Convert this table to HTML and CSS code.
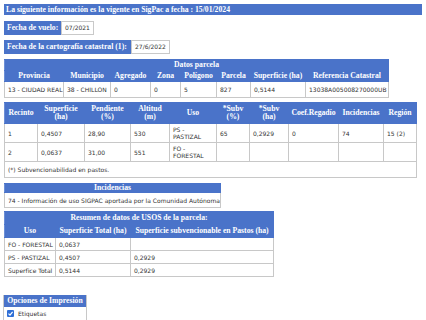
FILE: index.html
```html
<!DOCTYPE html>
<html lang="es">
<head>
<meta charset="utf-8">
<link rel="stylesheet" href="styles.css">
</head>
<body>
<div class="page">
  <div class="titlebar">La siguiente información es la vigente en SigPac a fecha : 15/01/2024</div>

  <div class="fecha fecha-vuelo"><span class="flabel">Fecha de vuelo:</span><span class="fvalue">07/2021</span></div>
  <div class="fecha fecha-cart"><span class="flabel">Fecha de la cartografía catastral (1):</span><span class="fvalue">27/6/2022</span></div>

  <table class="grid datos">
    <colgroup><col style="width:59px"><col style="width:47px"><col style="width:40px"><col style="width:30px"><col style="width:36px"><col style="width:34px"><col style="width:55px"><col style="width:83px"></colgroup>
    <tr><th class="cap" colspan="8">Datos parcela</th></tr>
    <tr><th>Provincia</th><th>Municipio</th><th>Agregado</th><th>Zona</th><th>Polígono</th><th>Parcela</th><th>Superficie (ha)</th><th>Referencia Catastral</th></tr>
    <tr><td>13 - CIUDAD REAL</td><td>38 - CHILLON</td><td>0</td><td>0</td><td>5</td><td>827</td><td>0,5144</td><td>13038A005008270000UB</td></tr>
  </table>

  <table class="grid recinto">
    <colgroup><col style="width:33px"><col style="width:47px"><col style="width:46px"><col style="width:39px"><col style="width:47px"><col style="width:33px"><col style="width:39px"><col style="width:50px"><col style="width:45px"><col style="width:33px"></colgroup>
    <tr class="head2"><th>Recinto</th><th>Superficie<br>(ha)</th><th>Pendiente<br>(%)</th><th>Altitud<br>(m)</th><th>Uso</th><th>*Subv<br>(%)</th><th>*Subv<br>(ha)</th><th>Coef.Regadío</th><th>Incidencias</th><th>Región</th></tr>
    <tr class="drow"><td>1</td><td>0,4507</td><td>28,90</td><td>530</td><td>PS -<br>PASTIZAL</td><td>65</td><td>0,2929</td><td>0</td><td>74</td><td>15 (2)</td></tr>
    <tr class="drow"><td>2</td><td>0,0637</td><td>31,00</td><td>551</td><td>FO -<br>FORESTAL</td><td></td><td></td><td></td><td></td><td></td></tr>
    <tr class="foot"><td colspan="10">(*) Subvencionabilidad en pastos.</td></tr>
  </table>

  <table class="grid incid">
    <tr><th class="cap">Incidencias</th></tr>
    <tr><td>74 - Información de uso SIGPAC aportada por la Comunidad Autónoma</td></tr>
  </table>

  <table class="grid resumen">
    <colgroup><col style="width:51px"><col style="width:75px"><col style="width:143px"></colgroup>
    <tr><th class="cap" colspan="3">Resumen de datos de USOS de la parcela:</th></tr>
    <tr><th>Uso</th><th>Superficie Total (ha)</th><th>Superficie subvencionable en Pastos (ha)</th></tr>
    <tr><td>FO - FORESTAL</td><td>0,0637</td><td></td></tr>
    <tr><td>PS - PASTIZAL</td><td>0,4507</td><td>0,2929</td></tr>
    <tr><td>Superfice Total</td><td>0,5144</td><td>0,2929</td></tr>
  </table>

  <div class="opciones">
    <div class="ophead">Opciones de Impresión</div>
    <div class="oprow"><span class="chk"><svg width="7" height="7" viewBox="0 0 7 7"><rect x="0" y="0" width="7" height="7" rx="1" fill="#2f6fd6"/><path d="M1.5 3.6 L3 5.1 L5.6 1.8" stroke="#fff" stroke-width="1.2" fill="none"/></svg></span>Etiquetas</div>
  </div>
</div>
</body>
</html>
```

FILE: styles.css
```css
* { box-sizing: border-box; }
html, body { margin: 0; padding: 0; background: #fff; }
body {
  font-family: "DejaVu Sans", Verdana, sans-serif;
  font-size: 6px;
  color: #333;
}
.page {
  padding: 4px 4px 0 4px;
  display: flex;
  flex-direction: column;
  align-items: flex-start;
}
.titlebar, .flabel, table.grid th, .ophead {
  font-family: "Liberation Serif", "Times New Roman", serif;
  font-weight: bold;
  font-size: 7.7px;
  color: #fff;
  background: #4a73c9;
}
.titlebar {
  align-self: stretch;
  height: 11px;
  line-height: 11px;
  padding-left: 2px;
  white-space: nowrap;
}
.fecha {
  display: flex;
  height: 14px;
}
.fecha-vuelo { margin-top: 6px; }
.fecha-cart { margin-top: 5px; }
.flabel {
  line-height: 14px;
  padding: 0 3px;
  white-space: nowrap;
}
.fecha-vuelo .flabel { width: 57px; }
.fecha-cart .flabel { width: 127px; }
.fvalue {
  border: 1px solid #c9c9c9;
  line-height: 12px;
  padding: 0 3px;
  background: #fff;
}
.fecha-vuelo .fvalue { width: 33px; }
.fecha-cart .fvalue { width: 39px; }

table.grid {
  border-collapse: collapse;
  table-layout: fixed;
  border: 1px solid #b4c3e2;
}
table.grid th {
  line-height: 8px;
  padding: 1px 1px;
  text-align: center;
  border: 1px solid #4a73c9;
  border-left-color: #6d8fd6;
  white-space: nowrap;
  overflow: hidden;
}
table.grid td {
  border: 1px solid #c8c8c8;
  line-height: 7px;
  padding: 4px 3px;
  text-align: left;
  vertical-align: middle;
  white-space: nowrap;
  overflow: hidden;
}
table.datos { margin-top: 5px; width: 384px; }
table.recinto { margin-top: 4px; width: 412px; }
table.recinto tr.head2 th { padding: 2px 1px; }
table.recinto tr.drow td { padding: 2px 3px; }
table.recinto tr.foot td { padding: 4px 3px; }
table.incid { margin-top: 5px; width: 217px; }
table.incid th.cap { padding: 0 1px; }
table.incid td { padding: 4px 3px 3px; line-height: 7px; }
table.resumen { margin-top: 3px; width: 269px; }
table.resumen th { padding: 2px 1px; }
table.resumen td { padding: 3px 3px 2px; line-height: 7px; }

.opciones {
  margin-top: 18px;
  margin-left: -1px;
  width: 84px;
  border-left: 1px solid #c8c8c8;
  border-right: 1px solid #c8c8c8;
}
.ophead {
  line-height: 12px;
  text-align: center;
  white-space: nowrap;
}
.oprow {
  display: flex;
  align-items: center;
  gap: 4px;
  padding: 3px 3px;
  line-height: 7px;
}
.chk { display: flex; }
```
